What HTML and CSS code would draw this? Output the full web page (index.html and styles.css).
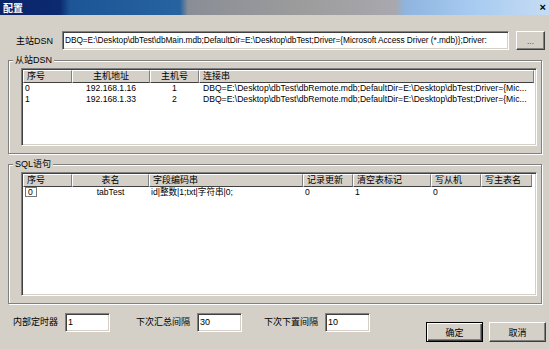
FILE: index.html
```html
<!DOCTYPE html>
<html lang="zh-CN">
<head>
    <meta charset="UTF-8">
    <title>配置</title>
    <link rel="stylesheet" href="styles.css">
</head>
<body>
    <div class="window">
        <div class="titlebar">
            <span class="title">配置</span>
            <span class="close">×</span>
        </div>

        <div class="dsn-row">
            <span class="dsn-label">主站DSN</span>
            <div class="textbox dsn-box">DBQ=E:\Desktop\dbTest\dbMain.mdb;DefaultDir=E:\Desktop\dbTest;Driver={Microsoft Access Driver (*.mdb)};Driver:</div>
            <div class="button dots">...</div>
        </div>

        <fieldset class="group">
            <legend>从站DSN</legend>
            <div class="listview slaves">
                <table>
                    <colgroup>
                        <col style="width:49px"><col style="width:78px"><col style="width:49px"><col style="width:335px">
                    </colgroup>
                    <tr>
                        <th>序号</th><th class="c">主机地址</th><th class="c">主机号</th><th>连接串</th>
                    </tr>
                    <tr>
                        <td>0</td><td class="c">192.168.1.16</td><td class="c">1</td>
                        <td class="conn">DBQ=E:\Desktop\dbTest\dbRemote.mdb;DefaultDir=E:\Desktop\dbTest;Driver={Mic...</td>
                    </tr>
                    <tr>
                        <td>1</td><td class="c">192.168.1.33</td><td class="c">2</td>
                        <td class="conn">DBQ=E:\Desktop\dbTest\dbRemote.mdb;DefaultDir=E:\Desktop\dbTest;Driver={Mic...</td>
                    </tr>
                </table>
            </div>
        </fieldset>

        <fieldset class="group sql">
            <legend>SQL语句</legend>
            <div class="listview statements">
                <table>
                    <colgroup>
                        <col style="width:49px"><col style="width:77px"><col style="width:154px"><col style="width:50px">
                        <col style="width:78px"><col style="width:50px"><col style="width:51px">
                    </colgroup>
                    <tr>
                        <th>序号</th><th class="c">表名</th><th>字段编码串</th><th>记录更新</th>
                        <th>清空表标记</th><th>写从机</th><th>写主表名</th>
                    </tr>
                    <tr>
                        <td><span class="focus">0</span></td><td class="c">tabTest</td><td>id|整数|1;txt|字符串|0;</td>
                        <td>0</td><td>1</td><td>0</td><td></td>
                    </tr>
                </table>
            </div>
        </fieldset>

        <div class="bottom-row">
            <span class="field-label">内部定时器</span>
            <div class="textbox small">1</div>
            <span class="field-label gap">下次汇总间隔</span>
            <div class="textbox small">30</div>
            <span class="field-label gap2">下次下置间隔</span>
            <div class="textbox small">10</div>
            <div class="actions">
                <div class="button default">确定</div>
                <div class="button">取消</div>
            </div>
        </div>
    </div>
</body>
</html>
```

FILE: styles.css
```css
:root {
    --face: #d4d0c8;
    --shadow: #808080;
    --dark: #404040;
    --light: #ffffff;
}

* {
    box-sizing: border-box;
}

body {
    margin: 0;
    background: var(--face);
    color: #000;
    font-family: "Liberation Sans", "Noto Sans CJK SC", sans-serif;
    font-size: 8.6px;
}

.window {
    width: 549px;
    height: 349px;
    overflow: hidden;
}

/* title bar */
.titlebar {
    height: 15px;
    display: flex;
    align-items: center;
    justify-content: space-between;
    padding: 0 3px;
    background: linear-gradient(to right,
        #0a246a 0, #0c2a70 60px, #1d5596 70px, #2763a0 180px,
        #8a8d96 188px, #9c9c9c 300px, #a8a8ae 395px,
        #8fb4de 405px, #a6caf0 470px, #c6dcf4 549px);
}

.title {
    color: #fff;
    font-weight: bold;
    font-size: 10px;
}

.close {
    color: #000;
    font-weight: bold;
    font-size: 11px;
    line-height: 11px;
}

/* main dsn */
.dsn-row {
    display: flex;
    align-items: center;
    margin-top: 16px;
    padding-left: 16px;
}

.dsn-label {
    width: 46px;
    font-size: 9px;
}

.textbox {
    height: 19px;
    background: #fff;
    border: 1px solid;
    border-color: var(--shadow) var(--light) var(--light) var(--shadow);
    box-shadow: inset 1px 1px var(--dark), inset -1px -1px var(--face);
    padding: 0 2px;
    line-height: 17px;
    white-space: nowrap;
    overflow: hidden;
}

.dsn-box {
    width: 447px;
    font-size: 8.3px;
    letter-spacing: -0.05px;
}

.button {
    height: 19px;
    display: flex;
    align-items: center;
    justify-content: center;
    background: var(--face);
    border: 1px solid;
    border-color: var(--light) var(--dark) var(--dark) var(--light);
    box-shadow: inset -1px -1px var(--shadow);
}

.dots {
    width: 29px;
    margin-left: 7px;
    color: #555;
}

/* group boxes */
.group {
    margin: 5px 0 0 8px;
    width: 534px;
    padding: 0 4px 7px 12px;
    border: 1px solid var(--shadow);
    box-shadow: inset 1px 1px var(--light), 1px 1px var(--light);
}

.group legend {
    margin-left: -8px;
    padding: 0 2px;
    line-height: 11px;
    font-size: 9px;
    background: var(--face);
}

.group.sql {
    margin-top: 5px;
    padding-bottom: 7px;
}

.listview {
    margin-top: 2px;
    background: #fff;
    border: 1px solid;
    border-color: var(--shadow) var(--light) var(--light) var(--shadow);
    box-shadow: inset 1px 1px var(--dark), inset -1px -1px var(--face);
    padding: 1px;
    overflow: hidden;
}

.slaves {
    height: 78px;
}

.statements {
    height: 124px;
}

table {
    table-layout: fixed;
    border-collapse: separate;
    border-spacing: 0;
    font-size: 8.6px;
}

th {
    height: 13px;
    padding: 0 3px;
    font-weight: normal;
    font-size: 9px;
    text-align: left;
    background: var(--face);
    border-top: 1px solid var(--light);
    border-left: 1px solid var(--light);
    border-right: 1px solid var(--shadow);
    border-bottom: 1px solid var(--dark);
    white-space: nowrap;
    overflow: hidden;
    line-height: 11px;
}

td {
    height: 11px;
    padding: 0 2px;
    line-height: 11px;
    white-space: nowrap;
    overflow: hidden;
}

td.conn {
    padding-left: 4px;
}

.c {
    text-align: center;
}

.focus {
    display: inline-block;
    border: 1px solid #777;
    padding: 0 3px 0 2px;
    line-height: 8px;
}

/* bottom controls */
.bottom-row {
    display: flex;
    align-items: flex-start;
    margin-top: 9px;
    padding: 0 3px 0 13px;
    font-size: 9px;
}

.field-label {
    line-height: 19px;
    margin-right: 7px;
}

.field-label.gap {
    margin-left: 26px;
}

.field-label.gap2 {
    margin-left: 22px;
}

.textbox.small {
    width: 45px;
}

.actions {
    margin-left: auto;
    margin-top: 9px;
    display: flex;
    gap: 6px;
}

.actions .button {
    width: 57px;
    height: 20px;
}

.actions .button.default {
    border-color: #000;
    box-shadow: inset 1px 1px var(--light), inset -1px -1px var(--dark), inset -2px -2px var(--shadow);
}
```
